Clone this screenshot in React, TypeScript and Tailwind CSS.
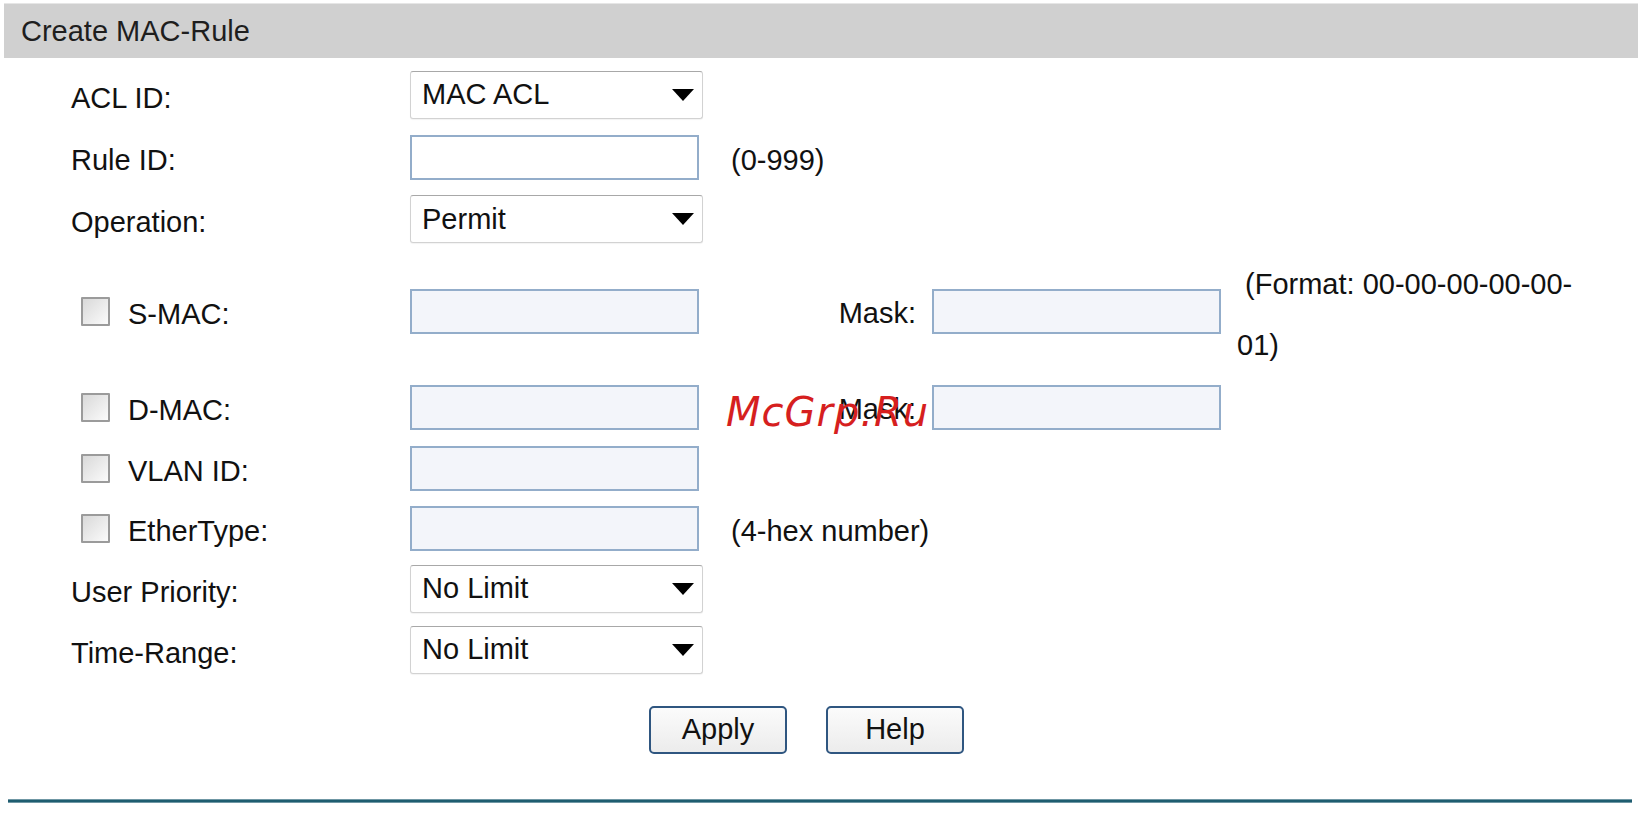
import React from 'react';

const Arrow: React.FC = () => (
  <svg width="22" height="12" viewBox="0 0 22 12" className="shrink-0">
    <polygon points="0,0 22,0 11,12" fill="#000" />
  </svg>
);

const Select: React.FC<{ value: string }> = ({ value }) => (
  <div className="w-[293px] h-[48px] bg-white border border-[#d2d2d2] border-t-[#a8a8a8] rounded-[3px] flex items-center justify-between pl-[11px] pr-[8px] shadow-[0_1px_1px_rgba(0,0,0,0.05)]">
    <span className="leading-none">{value}</span>
    <Arrow />
  </div>
);

const TextBox: React.FC<{ disabled?: boolean }> = ({ disabled }) => (
  <div
    className={`w-[289px] h-[45px] border-2 border-[#93adca] shrink-0 ${disabled ? 'bg-[#f3f5fa]' : 'bg-white'}`}
  />
);

const CheckBox: React.FC = () => (
  <div className="w-[29px] h-[29px] border-2 border-[#9b9b9b] bg-gradient-to-br from-[#d9d9d9] to-[#fbfbfb] rounded-[1px] ml-[10px] mr-[18px]" />
);

const Label: React.FC<{ text: string; check?: boolean }> = ({ text, check }) => (
  <div className="w-[339px] flex items-center shrink-0">
    {check && <CheckBox />}
    <span className="pt-[8px]">{text}</span>
  </div>
);

const Row: React.FC<{ h: string; children: React.ReactNode }> = ({ h, children }) => (
  <div className={`flex items-center pl-[71px] ${h}`}>{children}</div>
);

const Extra: React.FC<{ text: string }> = ({ text }) => <span className="pl-[32px] pt-[8px]">{text}</span>;

const Mask: React.FC = () => (
  <>
    <span className="w-[233px] text-right pr-[16px] pt-[6px] shrink-0">Mask:</span>
    <TextBox disabled />
  </>
);

const Button: React.FC<{ text: string }> = ({ text }) => (
  <button className="w-[138px] h-[48px] border-2 border-[#2f5680] rounded-[5px] bg-gradient-to-b from-[#fbfbfb] to-[#ececec] text-[29px] text-[#111] flex items-center justify-center">
    {text}
  </button>
);

export default function App() {
  return (
    <div className="relative w-[1638px] h-[823px] bg-white font-['Liberation_Sans',Arial,sans-serif] text-[29px] text-[#111] overflow-hidden">
      {/* Header */}
      <div className="pt-[3px] pl-[4px]">
        <div className="h-[55px] bg-[#d0d0d0] border-t border-[#e6e6e6] flex items-center pl-[17px]">
          <span className="text-[#1e1e1e] pt-[2px]">Create MAC-Rule</span>
        </div>
      </div>

      <div className="pt-[5px]">
        <Row h="h-[63px]">
          <Label text="ACL ID:" />
          <Select value="MAC ACL" />
        </Row>
        <Row h="h-[62px]">
          <Label text="Rule ID:" />
          <TextBox />
          <Extra text="(0-999)" />
        </Row>
        <Row h="h-[62px]">
          <Label text="Operation:" />
          <Select value="Permit" />
        </Row>
        <Row h="h-[122px]">
          <Label text="S-MAC:" check />
          <TextBox disabled />
          <Mask />
          <div className="pl-[16px] leading-[61px] pt-[8px] whitespace-nowrap">
            <div>&nbsp;(Format: 00-00-00-00-00-</div>
            <div>01)</div>
          </div>
        </Row>
        <Row h="h-[66px] pt-[4px]">
          <Label text="D-MAC:" check />
          <TextBox disabled />
          <Mask />
        </Row>
        <Row h="h-[60px]">
          <Label text="VLAN ID:" check />
          <TextBox disabled />
        </Row>
        <Row h="h-[60px]">
          <Label text="EtherType:" check />
          <TextBox disabled />
          <Extra text="(4-hex number)" />
        </Row>
        <Row h="h-[61px]">
          <Label text="User Priority:" />
          <Select value="No Limit" />
        </Row>
        <Row h="h-[61px]">
          <Label text="Time-Range:" />
          <Select value="No Limit" />
        </Row>

        <div className="flex gap-[39px] pl-[649px] mt-[26px]">
          <Button text="Apply" />
          <Button text="Help" />
        </div>

        <div className="ml-[8px] w-[1624px] h-[4px] bg-[#1f5d70] border-y border-[#6f97a4] mt-[45px]" />
      </div>

      {/* watermark */}
      <div className="absolute left-[726px] top-[392px] font-['DejaVu_Sans',sans-serif] italic text-[40px] text-[#d61f1f] tracking-[1px] leading-none">
        McGrp.Ru
      </div>
    </div>
  );
}
